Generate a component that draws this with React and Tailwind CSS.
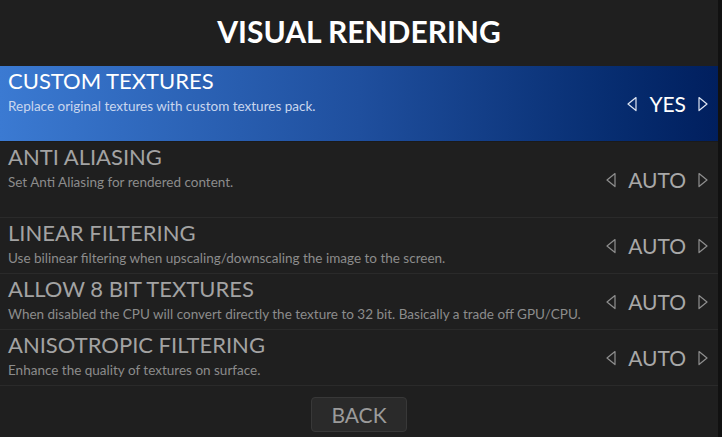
import React from 'react';

const options = [
  {
    id: 'textures',
    title: 'CUSTOM TEXTURES',
    desc: 'Replace original textures with custom textures pack.',
    value: 'YES',
    tall: true,
    active: true,
  },
  {
    id: 'aa',
    title: 'ANTI ALIASING',
    desc: 'Set Anti Aliasing for rendered content.',
    value: 'AUTO',
    tall: true,
  },
  {
    id: 'linear',
    title: 'LINEAR FILTERING',
    desc: 'Use bilinear filtering when upscaling/downscaling the image to the screen.',
    value: 'AUTO',
  },
  {
    id: '8bit',
    title: 'ALLOW 8 BIT TEXTURES',
    desc: 'When disabled the CPU will convert directly the texture to 32 bit. Basically a trade off GPU/CPU.',
    value: 'AUTO',
  },
  {
    id: 'aniso',
    title: 'ANISOTROPIC FILTERING',
    desc: 'Enhance the quality of textures on surface.',
    value: 'AUTO',
  },
];

const Arrow = ({ dir, className }) => (
  <svg width="10" height="16" viewBox="0 0 10 16" className={className}>
    {dir === 'left' ? (
      <polygon points="9,1.5 1,8 9,14.5" fill="none" stroke="currentColor" strokeWidth="1.2" strokeLinejoin="round" />
    ) : (
      <polygon points="1,1.5 9,8 1,14.5" fill="none" stroke="currentColor" strokeWidth="1.2" strokeLinejoin="round" />
    )}
  </svg>
);

const OptionRow = ({ option }) => {
  const { title, desc, value, tall, active } = option;

  return (
    <div
      className={`flex justify-between border-b ${tall ? 'h-[76px]' : 'h-[56px]'} ${
        active
          ? 'bg-gradient-to-r from-[#3b7ad2] via-[#1f4f9e] to-[#011f5e] border-[#1a1a1a]'
          : 'border-[#2a2a2a]'
      }`}
    >
      <div className="pl-2 pt-[2px]">
        <div className={`text-[22px] leading-[26px] ${active ? 'text-white' : 'text-[#a3a3a3]'}`}>{title}</div>
        <div className={`mt-[4px] text-[13.5px] leading-[16px] ${active ? 'text-[#c9d6ee]' : 'text-[#8c8c8c]'}`}>{desc}</div>
      </div>
      <div className={`flex items-center pr-[10px] ${active ? 'text-white' : 'text-[#a8a8a8]'}`}>
        <Arrow dir="left" className={active ? 'text-[#dfe6f3]' : 'text-[#8f8f8f]'} />
        <span className="mx-[12px] text-[21px] leading-none">{value}</span>
        <Arrow dir="right" className={active ? 'text-[#dfe6f3]' : 'text-[#8f8f8f]'} />
      </div>
    </div>
  );
};

export default function App() {
  return (
    <div className="flex h-[437px] w-[722px] bg-[#111111] font-['Lato',sans-serif]">
      <div className="flex w-[718px] flex-col bg-[#1f1f1f]">
        <div className="h-[66px] pt-[13px] text-center text-[30px] font-bold leading-[36px] text-white">
          VISUAL RENDERING
        </div>
        <div className="flex flex-col">
          {options.map((option) => (
            <OptionRow key={option.id} option={option} />
          ))}
        </div>
        <div className="flex justify-center pt-[11px]">
          <button className="h-[35px] w-[96px] rounded-[4px] border border-[#383838] bg-[#2a2a2a] text-[21px] leading-none text-[#9b9b9b]">
            BACK
          </button>
        </div>
      </div>
    </div>
  );
}
